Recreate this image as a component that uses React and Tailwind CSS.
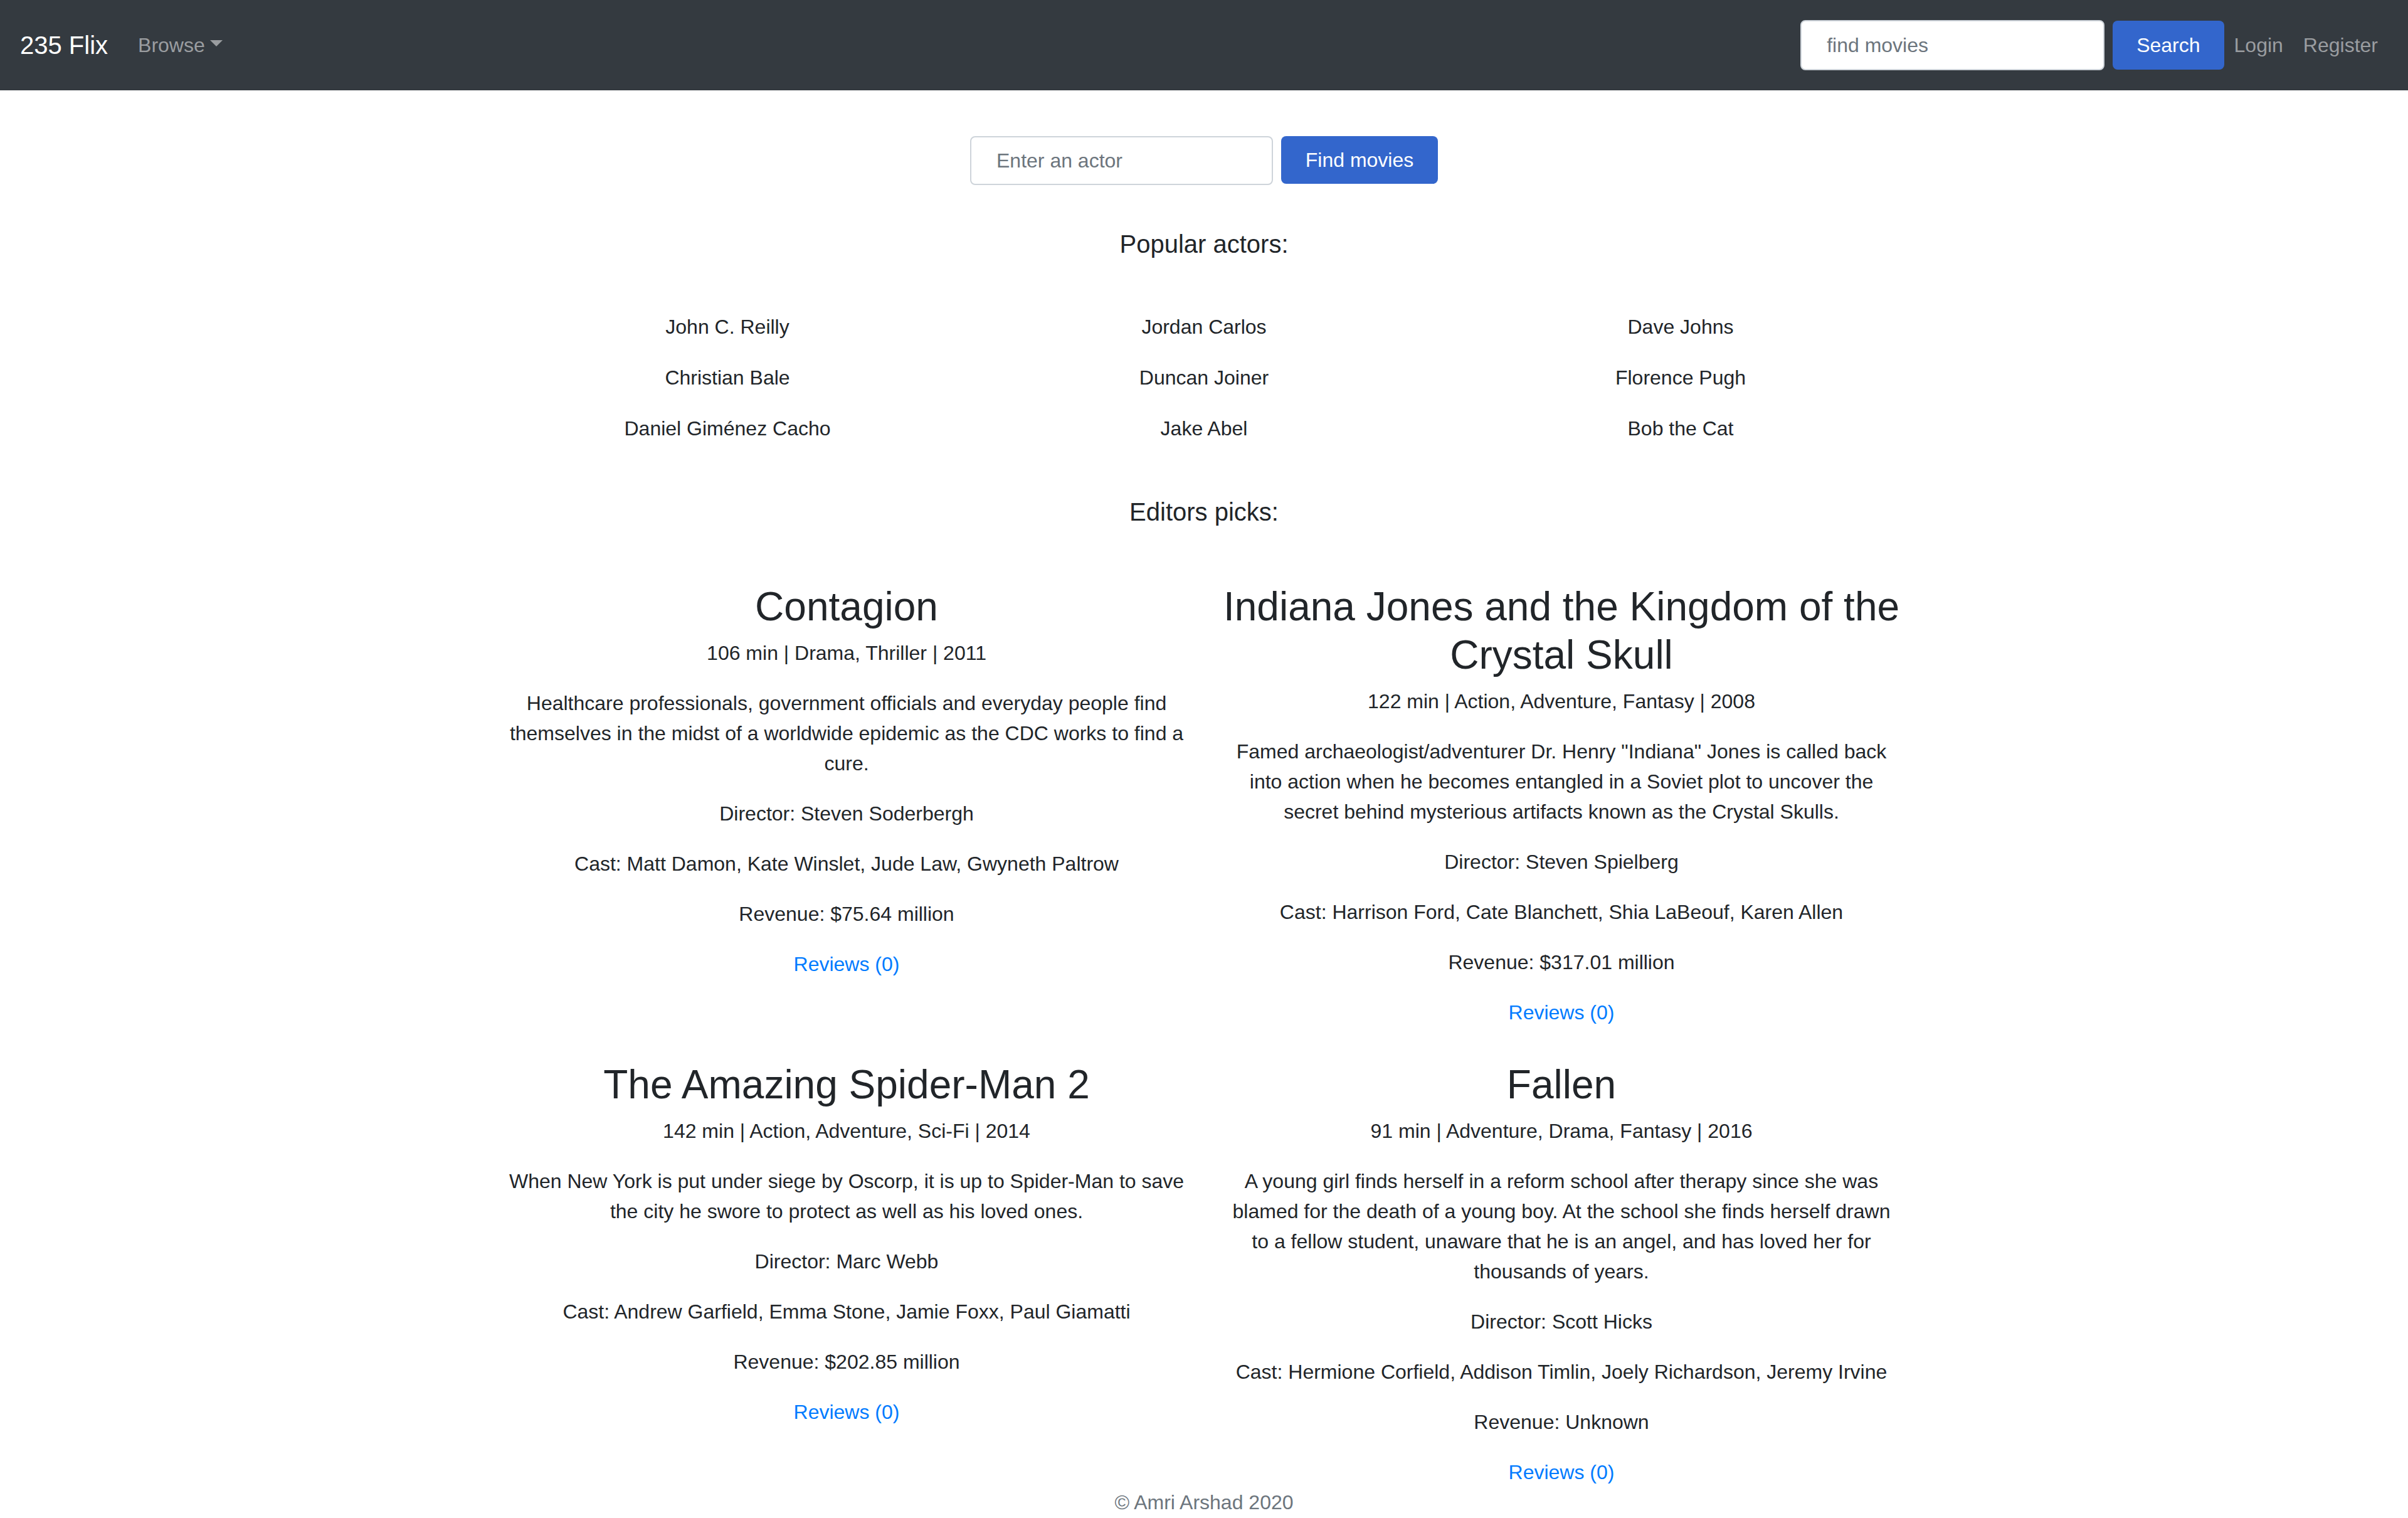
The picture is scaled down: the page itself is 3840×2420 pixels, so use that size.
import { useState } from 'react';

const actors = [
  'John C. Reilly',
  'Jordan Carlos',
  'Dave Johns',
  'Christian Bale',
  'Duncan Joiner',
  'Florence Pugh',
  'Daniel Giménez Cacho',
  'Jake Abel',
  'Bob the Cat',
];

const picks = [
  {
    title: 'Contagion',
    meta: '106 min | Drama, Thriller | 2011',
    plot: 'Healthcare professionals, government officials and everyday people find themselves in the midst of a worldwide epidemic as the CDC works to find a cure.',
    director: 'Steven Soderbergh',
    cast: 'Matt Damon, Kate Winslet, Jude Law, Gwyneth Paltrow',
    revenue: '$75.64 million',
  },
  {
    title: 'Indiana Jones and the Kingdom of the Crystal Skull',
    meta: '122 min | Action, Adventure, Fantasy | 2008',
    plot: 'Famed archaeologist/adventurer Dr. Henry "Indiana" Jones is called back into action when he becomes entangled in a Soviet plot to uncover the secret behind mysterious artifacts known as the Crystal Skulls.',
    director: 'Steven Spielberg',
    cast: 'Harrison Ford, Cate Blanchett, Shia LaBeouf, Karen Allen',
    revenue: '$317.01 million',
  },
  {
    title: 'The Amazing Spider-Man 2',
    meta: '142 min | Action, Adventure, Sci-Fi | 2014',
    plot: 'When New York is put under siege by Oscorp, it is up to Spider-Man to save the city he swore to protect as well as his loved ones.',
    director: 'Marc Webb',
    cast: 'Andrew Garfield, Emma Stone, Jamie Foxx, Paul Giamatti',
    revenue: '$202.85 million',
  },
  {
    title: 'Fallen',
    meta: '91 min | Adventure, Drama, Fantasy | 2016',
    plot: 'A young girl finds herself in a reform school after therapy since she was blamed for the death of a young boy. At the school she finds herself drawn to a fellow student, unaware that he is an angel, and has loved her for thousands of years.',
    director: 'Scott Hicks',
    cast: 'Hermione Corfield, Addison Timlin, Joely Richardson, Jeremy Irvine',
    revenue: 'Unknown',
  },
];

function MovieCard({ movie }) {
  return (
    <div className="px-[30px] text-center">
      <h2 className="mb-[11px] pt-[5px] text-[64px] leading-[77px] font-normal">{movie.title}</h2>
      <p className="mb-8">{movie.meta}</p>
      <p className="mb-8">{movie.plot}</p>
      <p className="mb-8">Director: {movie.director}</p>
      <p className="mb-8">Cast: {movie.cast}</p>
      <p className="mb-8">Revenue: {movie.revenue}</p>
      <a href="#" className="text-[#007bff] hover:underline">
        Reviews (0)
      </a>
    </div>
  );
}

export default function App() {
  const [actor, setActor] = useState('');
  const [query, setQuery] = useState('');

  return (
    <div className="min-h-screen bg-white font-['Liberation_Sans',Arial,sans-serif] text-[32px] leading-[48px] text-[#212529]">
      {/* Navbar */}
      <nav className="flex h-[144px] items-center bg-[#343a40] px-8">
        <a href="#" className="mr-8 text-[40px] leading-[60px] text-white">
          235 Flix
        </a>
        <a href="#" className="flex items-center px-4 text-[#9a9da0]">
          Browse
          <span className="ml-2 inline-block h-0 w-0 -translate-y-[3px] border-x-[10px] border-t-[10px] border-x-transparent border-t-[#9a9da0]" />
        </a>
        <form className="ml-auto flex items-center" onSubmit={(e) => e.preventDefault()}>
          <input
            value={query}
            onChange={(e) => setQuery(e.target.value)}
            placeholder="find movies"
            className="h-[80px] w-[485px] rounded-lg border-2 border-[#ced4da] bg-white pl-[40px] pr-6 text-[#495057] outline-none placeholder:text-[#6c757d]"
          />
          <button
            type="submit"
            className="ml-[13px] h-[78px] rounded-lg bg-[#3366cc] px-[38px] text-white"
          >
            Search
          </button>
        </form>
        <a href="#" className="px-4 text-[#9a9da0]">Login</a>
        <a href="#" className="px-4 text-[#9a9da0]">Register</a>
      </nav>

      <main className="mx-auto w-[2280px] text-center">
        {/* Actor search */}
        <form className="mt-[73px] flex justify-center" onSubmit={(e) => e.preventDefault()}>
          <input
            value={actor}
            onChange={(e) => setActor(e.target.value)}
            placeholder="Enter an actor"
            className="h-[78px] w-[483px] rounded-lg border-2 border-[#ced4da] bg-white pl-[40px] pr-6 text-left text-[#495057] outline-none placeholder:text-[#6c757d]"
          />
          <button type="submit" className="ml-[13px] h-[76px] w-[250px] rounded-lg bg-[#3366cc] text-white">
            Find movies
          </button>
        </form>

        <h5 className="mt-[70px] text-[40px] leading-[48px]">Popular actors:</h5>

        <div className="mt-[84px] grid grid-cols-3 gap-y-[33px]">
          {actors.map((name) => (
            <p key={name} className="px-[30px]">
              {name}
            </p>
          ))}
        </div>

        <h5 className="mt-[85px] text-[40px] leading-[48px]">Editors picks:</h5>

        <div className="mt-[84px] grid grid-cols-2 gap-y-[48px]">
          {picks.map((movie) => (
            <MovieCard key={movie.title} movie={movie} />
          ))}
        </div>

        <footer className="text-[#6c757d]">© Amri Arshad 2020</footer>
      </main>
    </div>
  );
}
